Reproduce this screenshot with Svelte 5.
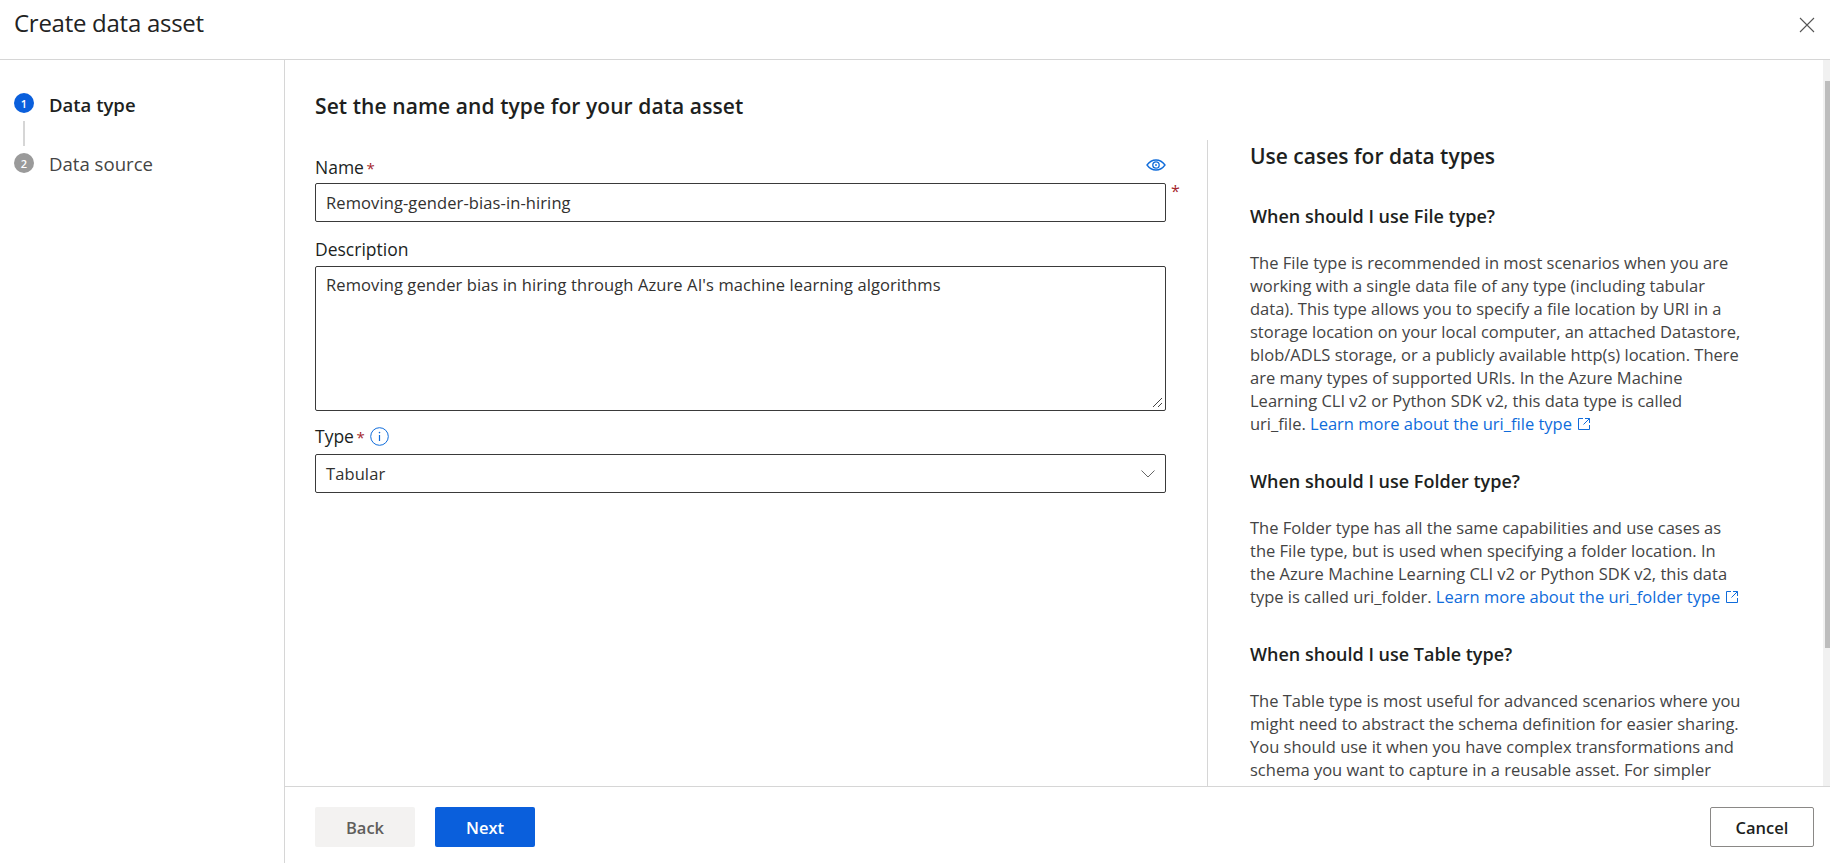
<script>
  const fileLines = [
    'The File type is recommended in most scenarios when you are',
    'working with a single data file of any type (including tabular',
    'data). This type allows you to specify a file location by URI in a',
    'storage location on your local computer, an attached Datastore,',
    'blob/ADLS storage, or a publicly available http(s) location. There',
    'are many types of supported URIs. In the Azure Machine',
    'Learning CLI v2 or Python SDK v2, this data type is called'
  ];
  const folderLines = [
    'The Folder type has all the same capabilities and use cases as',
    'the File type, but is used when specifying a folder location. In',
    'the Azure Machine Learning CLI v2 or Python SDK v2, this data'
  ];
  const tableLines = [
    'The Table type is most useful for advanced scenarios where you',
    'might need to abstract the schema definition for easier sharing.',
    'You should use it when you have complex transformations and',
    'schema you want to capture in a reusable asset. For simpler'
  ];
</script>

{#snippet ext()}
  <svg class="ext" width="14" height="14" viewBox="0 0 14 14" fill="none" stroke="#0f6cdb" stroke-width="1">
    <path d="M6 1.500H1.500v11h11V8M8 1.500h4.500V6M12.500 1.500 6.500 7.500" />
  </svg>
{/snippet}

<div class="page">
  <header class="top">
    <h1>Create data asset</h1>
    <svg class="close" width="16" height="16" viewBox="0 0 16 16" fill="none" stroke="#555" stroke-width="1.100">
      <path d="M1 1l14 14M15 1L1 15" />
    </svg>
  </header>

  <div class="body">
    <nav class="steps">
      <div class="step active"><span class="dot blue">1</span><span class="steplabel">Data type</span></div>
      <div class="connector"></div>
      <div class="step"><span class="dot grey">2</span><span class="steplabel">Data source</span></div>
    </nav>

    <div class="panel">
      <div class="scroll">
        <main class="form">
          <h2>Set the name and type for your data asset</h2>
          <div class="namelabel">
            <span class="label">Name <span class="req">*</span></span>
            <svg class="eye" width="20" height="12" viewBox="0 0 20 12" fill="none" stroke="#0f6cdb" stroke-width="1.300">
              <path d="M1 6c2.400-3.300 5.400-5 9-5s6.600 1.700 9 5c-2.400 3.300-5.400 5-9 5s-6.600-1.700-9-5z" />
              <circle cx="10" cy="6" r="3.200" />
              <circle cx="10" cy="6" r="0.900" fill="#0f6cdb" stroke="none" />
            </svg>
          </div>
          <div class="inputrow">
            <div class="box input">Removing-gender-bias-in-hiring</div>
            <span class="req outer">*</span>
          </div>
          <div class="label gap">Description</div>
          <div class="box area">
            Removing gender bias in hiring through Azure AI's machine learning algorithms
            <svg class="grip" width="12" height="12" viewBox="0 0 12 12" stroke="#444" stroke-width="1" fill="none">
              <path d="M2 11 11 2M7 11l4-4" />
            </svg>
          </div>
          <div class="label gap typelabel">
            <span>Type <span class="req">*</span></span>
            <svg width="19" height="19" viewBox="0 0 19 19" fill="none" stroke="#0f6cdb" stroke-width="1">
              <circle cx="9.500" cy="9.500" r="8.800" />
              <path d="M9.500 8v6" stroke-width="1.200" />
              <circle cx="9.500" cy="5.600" r="0.800" fill="#0f6cdb" stroke="none" />
            </svg>
          </div>
          <div class="box select">
            Tabular
            <svg width="14" height="8" viewBox="0 0 14 8" fill="none" stroke="#666" stroke-width="1">
              <path d="M.5.500l6.500 6.500 6.500-6.500" />
            </svg>
          </div>
        </main>

        <aside class="help">
          <h3>Use cases for data types</h3>
          <h4 class="first">When should I use File type?</h4>
          <p>
            {#each fileLines as l}<span class="ln">{l}</span>{/each}
            <span class="ln">uri_file. <a href="#file">Learn more about the uri_file type</a>{@render ext()}</span>
          </p>
          <h4>When should I use Folder type?</h4>
          <p>
            {#each folderLines as l}<span class="ln">{l}</span>{/each}
            <span class="ln">type is called uri_folder. <a href="#folder">Learn more about the uri_folder type</a>{@render ext()}</span>
          </p>
          <h4>When should I use Table type?</h4>
          <p>
            {#each tableLines as l}<span class="ln">{l}</span>{/each}
          </p>
        </aside>

        <div class="scrollbar"><div class="thumb"></div></div>
      </div>

      <footer class="foot">
        <button class="btn back">Back</button>
        <button class="btn next">Next</button>
        <button class="btn cancel">Cancel</button>
      </footer>
    </div>
  </div>
</div>

<style>
  :global(body) { margin: 0; background: #fff; }
  .page {
    width: 1830px; height: 863px; display: flex; flex-direction: column; overflow: hidden;
    font-family: "Open Sans", "Noto Sans", sans-serif; color: #201f1e; background: #fff;
  }
  .top {
    height: 59px; flex: none; border-bottom: 1px solid #d6d6d6; display: flex; align-items: center;
    justify-content: space-between; padding: 0 15px 0 14px;
  }
  h1 { margin: 0 0 15px; font-size: 24px; font-weight: 400; letter-spacing: -0.27px; color: #222; }
  .close { margin-bottom: 9px; }
  .body { flex: 1; display: flex; min-height: 0; }
  .steps { flex: none; border-right: 1px solid #d6d6d6; padding-top: 33px; padding-left: 14px; width: 270px; }
  .step { display: flex; align-items: center; height: 20px; gap: 15px; font-size: 18.600px; color: #444; }
  .step.active { font-weight: 600; font-size: 18.500px; color: #201f1e; }
  .step.active .steplabel { padding-top: 3px; }
  .dot {
    width: 20px; height: 20px; border-radius: 50%; color: #fff; font-size: 11px; font-weight: 600;
    display: flex; align-items: center; justify-content: center;
  }
  .blue { background: #0a5fdc; }
  .grey { background: #9a9a9a; }
  .connector { width: 2px; height: 25px; margin: 8px 0 7px 9px; background: #d6d6d6; }
  .panel { flex: 1; display: flex; flex-direction: column; min-width: 0; }
  .scroll { flex: 1; display: flex; min-height: 0; overflow: hidden; position: relative; padding-left: 30px; }
  .form { width: 851px; flex: none; }
  h2 { margin: 33px 0 0; font-size: 21px; line-height: 26px; font-weight: 600; letter-spacing: 0.08px; color: #201f1e; }
  .namelabel { display: flex; justify-content: space-between; align-items: center; margin-top: 33px; height: 31px; }
  .eye { margin-top: -6px; }
  .label { font-size: 17.500px; font-weight: 500; line-height: 22px; color: #201f1e; }
  .req { color: #a4262c; font-weight: 400; font-size: 15px; margin-left: -2px; }
  .inputrow { position: relative; }
  .outer { position: absolute; left: 856px; top: -3px; font-size: 16px; margin-left: 0; }
  .box {
    box-sizing: border-box; border: 1px solid #3a3a3a; border-radius: 2px; font-size: 16.500px;
    letter-spacing: 0.1px; color: #323130; padding: 0 10px; position: relative; background: #fff;
  }
  .input { height: 39px; display: flex; align-items: center; }
  .gap { margin-top: 16px; margin-bottom: 6px; }
  .area { height: 145px; padding-top: 7px; line-height: 22px; }
  .grip { position: absolute; right: 2px; bottom: 2px; }
  .typelabel { display: flex; align-items: center; gap: 5px; margin-top: 14px; margin-bottom: 6px; }
  .select { height: 39px; display: flex; align-items: center; justify-content: space-between; padding-right: 10px; }
  .help {
    margin-left: 41px; padding-left: 42px; border-left: 1px solid #d6d6d6; margin-top: 80px; width: 560px; flex: none;
  }
  h3 { margin: 3px 0 0; font-size: 21px; line-height: 26px; font-weight: 600; color: #201f1e; }
  h4 { margin: 34px 0 0; font-size: 18px; line-height: 24px; font-weight: 600; color: #201f1e; }
  h4.first { margin-top: 35px; }
  p { margin: 23px 0 0; font-size: 16.500px; line-height: 23px; color: #444; }
  .ln { display: block; white-space: nowrap; }
  a { color: #0f6cdb; text-decoration: none; }
  .ext { margin-left: 5px; vertical-align: -1px; }
  .scrollbar { position: absolute; right: 0; top: 0; bottom: 0; width: 7px; background: #f1f1f1; }
  .thumb { position: absolute; left: 2px; right: 0; top: 21px; height: 567px; background: #bdbdbd; }
  .foot {
    flex: none; height: 77px; box-sizing: border-box; border-top: 1px solid #d6d6d6; display: flex; align-items: center;
    padding: 4px 16px 0 30px; gap: 20px; background: #fff;
  }
  .btn {
    height: 40px; width: 100px; font-family: inherit; font-size: 16.500px; font-weight: 600;
    border-radius: 2px; border: none; padding: 0;
  }
  .back { background: #f3f2f1; color: #605e5c; }
  .next { background: #0a5fdc; color: #fff; }
  .cancel { margin-left: auto; width: 104px; background: #fff; color: #201f1e; border: 1px solid #8a8886; }
</style>
